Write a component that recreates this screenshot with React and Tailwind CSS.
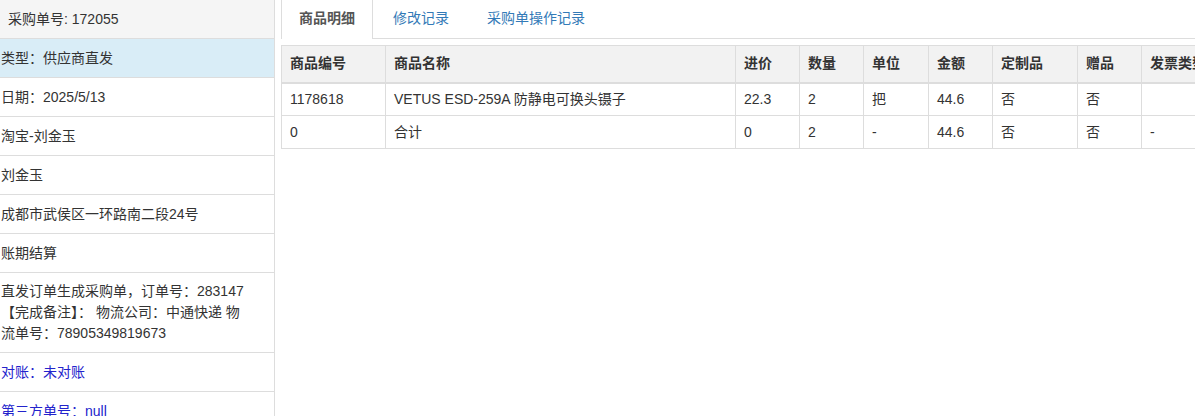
import React, { useState } from 'react';

const font = { fontFamily: '"Liberation Sans", "Noto Sans CJK SC", sans-serif' };

const infoRows = [
  { text: '类型：供应商直发', cls: 'bg-[#d9edf7]' },
  { text: '日期：2025/5/13' },
  { text: '淘宝-刘金玉' },
  { text: '刘金玉' },
  { text: '成都市武侯区一环路南二段24号' },
  { text: '账期结算' },
];

const columns = [
  { key: 'code', title: '商品编号', w: 104 },
  { key: 'name', title: '商品名称', w: 350 },
  { key: 'price', title: '进价', w: 64 },
  { key: 'qty', title: '数量', w: 64 },
  { key: 'unit', title: '单位', w: 65 },
  { key: 'amount', title: '金额', w: 64 },
  { key: 'custom', title: '定制品', w: 85 },
  { key: 'gift', title: '赠品', w: 64 },
  { key: 'invoice', title: '发票类型', w: 90 },
];

const rows = [
  { code: '1178618', name: 'VETUS ESD-259A 防静电可换头镊子', price: '22.3', qty: '2', unit: '把', amount: '44.6', custom: '否', gift: '否', invoice: '' },
  { code: '0', name: '合计', price: '0', qty: '2', unit: '-', amount: '44.6', custom: '否', gift: '否', invoice: '-' },
];

const tabs = ['商品明细', '修改记录', '采购单操作记录'];

export default function App() {
  const [tab, setTab] = useState(0);

  return (
    <div className="flex w-[1195px] h-[416px] overflow-hidden bg-white text-[14px] text-[#333]" style={font}>
      <aside className="w-[275px] shrink-0 border-r border-[#ddd]">
        <div className="h-[39px] flex items-center pl-[8px] bg-[#f5f5f5] border-b border-[#ddd]">采购单号: 172055</div>
        {infoRows.map((r, i) => (
          <div key={i} className={`h-[39px] flex items-center pl-[1px] border-b border-[#ddd] ${r.cls || ''}`}>
            {r.text}
          </div>
        ))}
        <div className="py-[8px] pl-[1px] leading-[21px] border-b border-[#ddd]">
          <div>直发订单生成采购单，订单号：283147</div>
          <div>【完成备注】： 物流公司：中通快递 物</div>
          <div>流单号：78905349819673</div>
        </div>
        <div className="h-[39px] flex items-center pl-[1px] border-b border-[#ddd] text-[#2323cc]">对账：未对账</div>
        <div className="h-[39px] flex items-center pl-[1px] border-b border-[#ddd] text-[#2323cc]">第三方单号：null</div>
      </aside>

      <main className="flex-1 min-w-0 pl-[6px] overflow-hidden">
        <div className="flex h-[39px] border-b border-[#ddd]">
          {tabs.map((t, i) => (
            <button
              key={t}
              onClick={() => setTab(i)}
              className={`h-[39px] px-[17px] mr-[2px] leading-[34px] pb-[4px] ${
                i === tab
                  ? 'bg-white border-x border-[#ddd] -mb-px font-bold text-[#555]'
                  : 'text-[#337ab7] border-x border-transparent'
              }`}
            >
              {t}
            </button>
          ))}
        </div>

        <table className="mt-[6px] table-fixed border-collapse w-[950px]">
          <colgroup>
            {columns.map((c) => (
              <col key={c.key} style={{ width: c.w }} />
            ))}
          </colgroup>
          <thead>
            <tr className="bg-[#f2f2f2]">
              {columns.map((c) => (
                <th key={c.key} className="h-[37px] px-[8px] text-left font-bold whitespace-nowrap overflow-hidden border border-[#ddd] border-b-2">
                  {c.title}
                </th>
              ))}
            </tr>
          </thead>
          <tbody>
            {rows.map((r, i) => (
              <tr key={i}>
                {columns.map((c) => (
                  <td key={c.key} className="h-[33px] px-[8px] whitespace-nowrap border border-[#ddd]">
                    {r[c.key]}
                  </td>
                ))}
              </tr>
            ))}
          </tbody>
        </table>
      </main>
    </div>
  );
}
